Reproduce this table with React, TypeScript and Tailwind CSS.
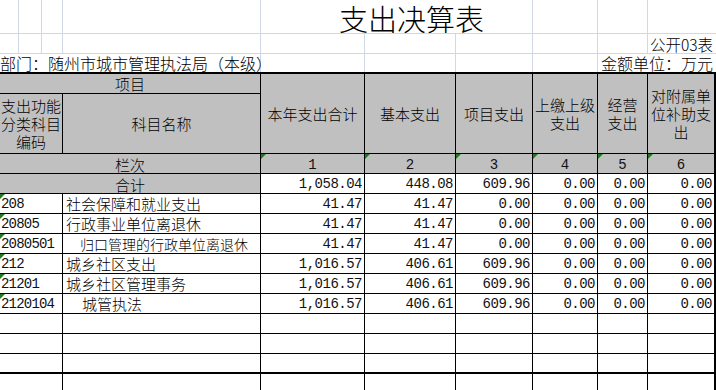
import React from "react";

const cjk = "font-['Noto_Sans_CJK_SC',sans-serif] font-light";
const mono = "font-['Liberation_Mono',monospace]";

function Tri() {
  return (
    <span className="absolute left-0 top-0 w-0 h-0 border-t-[5px] border-r-[5px] border-t-[#1f7a1f] border-r-transparent" />
  );
}

function HeadCell({ children, className = "" }: { children?: React.ReactNode; className?: string }) {
  return (
    <div className={`bg-[#c0c0c0] flex items-center justify-center text-center text-[15px] leading-[18px] text-black ${cjk} ${className}`}>
      {children}
    </div>
  );
}

function Num({ v }: { v?: string }) {
  return (
    <div className={`bg-white flex items-center justify-end pr-[2px] pt-[2px] text-[14px] leading-[17px] tracking-[-0.5px] text-[#111] ${mono}`}>
      {v}
    </div>
  );
}

type Row = { code: string; name: string; indent: string; size: string; vals: string[] };

const rows: Row[] = [
  { code: "208", name: "社会保障和就业支出", indent: "pl-[3px]", size: "text-[15px]", vals: ["41.47", "41.47", "0.00", "0.00", "0.00", "0.00"] },
  { code: "20805", name: "行政事业单位离退休", indent: "pl-[3px]", size: "text-[15px]", vals: ["41.47", "41.47", "0.00", "0.00", "0.00", "0.00"] },
  { code: "2080501", name: "归口管理的行政单位离退休", indent: "pl-[17px]", size: "text-[14px]", vals: ["41.47", "41.47", "0.00", "0.00", "0.00", "0.00"] },
  { code: "212", name: "城乡社区支出", indent: "pl-[3px]", size: "text-[15px]", vals: ["1,016.57", "406.61", "609.96", "0.00", "0.00", "0.00"] },
  { code: "21201", name: "城乡社区管理事务", indent: "pl-[3px]", size: "text-[15px]", vals: ["1,016.57", "406.61", "609.96", "0.00", "0.00", "0.00"] },
  { code: "2120104", name: "城管执法", indent: "pl-[19px]", size: "text-[15px]", vals: ["1,016.57", "406.61", "609.96", "0.00", "0.00", "0.00"] },
];

function Blank() {
  return <div className="bg-white" />;
}

export default function App() {
  return (
    <div className="w-[716px] h-[390px] overflow-hidden bg-white text-black">
      {/* sheet area above the table */}
      <div className="grid grid-cols-[18px_22px_20px_197px_103px_90px_76px_64px_49px_68px] grid-rows-[33px_19px_18px] gap-px bg-[#d0d7e5]">
        <Blank />
        <Blank />
        <Blank />
        <Blank />
        <div className={`col-span-3 bg-white flex items-start pt-[4px] pl-[78px] text-[29px] leading-[29px] whitespace-nowrap ${cjk}`}>
          支出决算表
        </div>
        <Blank />
        <Blank />
        <Blank />

        <Blank />
        <Blank />
        <Blank />
        <Blank />
        <Blank />
        <Blank />
        <Blank />
        <Blank />
        <Blank />
        <div className={`bg-white flex items-end justify-end pr-[3px] text-[15.5px] leading-[18px] whitespace-nowrap ${cjk}`}>
          公开03表
        </div>

        <div className={`col-span-4 bg-white flex items-end text-[16px] leading-[18px] whitespace-nowrap overflow-visible ${cjk}`}>
          部门：随州市城市管理执法局（本级）
        </div>
        <Blank />
        <Blank />
        <Blank />
        <Blank />
        <div className={`col-span-2 bg-white flex items-end justify-end pr-[3px] text-[16px] leading-[18px] whitespace-nowrap ${cjk}`}>
          金额单位：万元
        </div>
      </div>

      {/* the table */}
      <div className="w-[716px] border-t-2 border-r-2 border-black bg-black flex flex-col gap-[2px]">
        <div className="grid grid-cols-[62px_197px_103px_90px_76px_64px_49px_66px] grid-rows-[19px_59px_19px_19px_19px_19px_19px_19px_19px_19px_19px_19px_18px] gap-px">
          <HeadCell className="col-span-2">项目</HeadCell>
          <HeadCell className="row-span-2">本年支出合计</HeadCell>
          <HeadCell className="row-span-2">基本支出</HeadCell>
          <HeadCell className="row-span-2">项目支出</HeadCell>
          <HeadCell className="row-span-2">
            上缴上级
            <br />
            支出
          </HeadCell>
          <HeadCell className="row-span-2">
            经营
            <br />
            支出
          </HeadCell>
          <HeadCell className="row-span-2">
            对附属单
            <br />
            位补助支
            <br />
            出
          </HeadCell>
          <HeadCell className="leading-[18.5px] whitespace-nowrap">
            支出功能
            <br />
            分类科目
            <br />
            编码
          </HeadCell>
          <HeadCell>科目名称</HeadCell>

          <HeadCell className="col-span-2 pt-[2px]">栏次</HeadCell>
          {["1", "2", "3", "4", "5", "6"].map((n) => (
            <div
              key={n}
              className={`relative bg-[#c0c0c0] flex items-center justify-center pt-[4px] text-[14px] leading-[17px] text-[#111] ${mono}`}
            >
              <Tri />
              {n}
            </div>
          ))}

          <HeadCell className="col-span-2 pt-[2px]">合计</HeadCell>
          {["1,058.04", "448.08", "609.96", "0.00", "0.00", "0.00"].map((v, i) => (
            <Num key={i} v={v} />
          ))}

          {rows.map((r) => (
            <React.Fragment key={r.code}>
              <div className={`relative bg-white flex items-center pl-px pt-[2px] text-[14px] leading-[17px] tracking-[-0.8px] text-[#111] ${mono}`}>
                <Tri />
                {r.code}
              </div>
              <div className={`bg-white flex items-center pt-px leading-[18px] whitespace-nowrap ${r.indent} ${r.size} ${cjk}`}>
                {r.name}
              </div>
              {r.vals.map((v, i) => (
                <Num key={i} v={v} />
              ))}
            </React.Fragment>
          ))}

          {[0, 1, 2].map((k) => (
            <React.Fragment key={k}>
              <Blank />
              <Blank />
              <Blank />
              <Blank />
              <Blank />
              <Blank />
              <Blank />
              <Blank />
            </React.Fragment>
          ))}
        </div>
        <div className="grid grid-cols-[62px_197px_103px_90px_76px_64px_49px_66px] grid-rows-[19px] gap-px">
          <Blank />
          <Blank />
          <Blank />
          <Blank />
          <Blank />
          <Blank />
          <Blank />
          <Blank />
        </div>
      </div>
    </div>
  );
}
